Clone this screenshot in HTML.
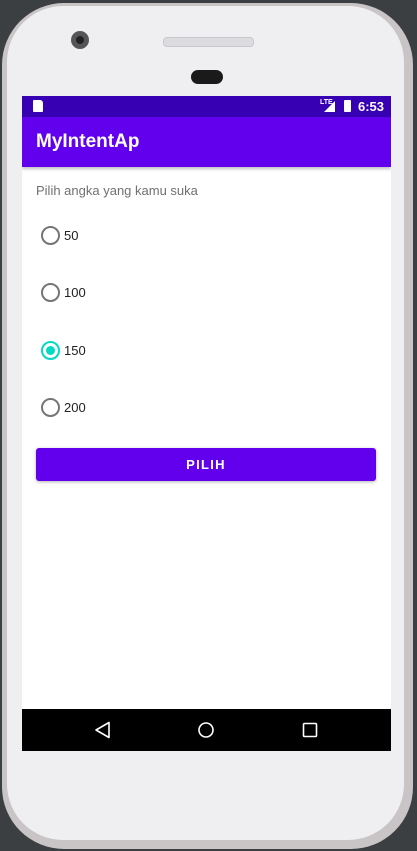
<!DOCTYPE html>
<html><head><style>
body{margin:0;width:417px;height:851px;background:#3c3f41;position:relative;overflow:hidden;font-family:"Liberation Sans",sans-serif}
.phone{position:absolute;left:2px;top:3px;width:411px;height:846px;border-radius:62px;background:#c9c4c6;}
.body{position:absolute;left:7px;top:6px;width:397px;height:834px;border-radius:56px;background:#efeff1;}
.screen{position:absolute;left:22px;top:96px;width:369px;height:655px;background:#fff;overflow:hidden}
.sb{height:21px;background:#3700b3;position:relative;color:#fff;font-size:13px}
.ab{height:50px;background:#6200ee;color:#fff;font-size:19px;font-weight:bold;line-height:50px;padding-left:14px;box-shadow:0 2px 3px rgba(0,0,0,.25);position:relative}
.nav{position:absolute;left:0;top:613px;width:369px;height:42px;background:#000}
.r{position:absolute;left:19px;width:15px;height:15px;border:2px solid #757575;border-radius:50%}
.t{position:absolute;left:42px;font-size:13px;color:#222}
</style></head><body>
<div class="phone"></div><div class="body"></div>
<div style="position:absolute;left:71px;top:31px;width:18px;height:18px;border-radius:50%;background:#555"><div style="position:absolute;left:5px;top:5px;width:8px;height:8px;border-radius:50%;background:#222"></div></div>
<div style="position:absolute;left:163px;top:37px;width:89px;height:8px;border-radius:4px;background:#dcdce0;border:1px solid #c8c8cc"></div>
<div style="position:absolute;left:191px;top:70px;width:32px;height:14px;border-radius:7px;background:#1a1a1a"></div>
<div class="screen">
<div class="sb"><div style="position:absolute;left:11px;top:4px;width:10px;height:12px;background:#fff;border-radius:1px 3px 1px 1px"></div>
<span style="position:absolute;left:298px;top:3px;font-size:7px;font-weight:bold">LTE</span>
<div style="position:absolute;left:302px;top:5px;width:0;height:0;border-left:11px solid transparent;border-bottom:11px solid #fff"></div>
<div style="position:absolute;left:322px;top:4px;width:7px;height:12px;background:#fff;border-radius:1px"></div>
<span style="position:absolute;left:336px;top:3px;font-weight:bold">6:53</span></div>
<div class="ab">MyIntentAp</div>
<div style="position:absolute;left:14px;top:87px;font-size:13px;color:#707070">Pilih angka yang kamu suka</div>
<div class="r" style="top:130px"></div><div class="t" style="top:132px">50</div>
<div class="r" style="top:187px"></div><div class="t" style="top:189px">100</div>
<div class="r" style="top:245px;border-color:#03dac5"><div style="position:absolute;left:3px;top:3px;width:9px;height:9px;border-radius:50%;background:#03dac5"></div></div><div class="t" style="top:247px">150</div>
<div class="r" style="top:302px"></div><div class="t" style="top:304px">200</div>
<div style="position:absolute;left:14px;top:352px;width:340px;height:33px;background:#6200ee;border-radius:3px;box-shadow:0 1px 3px rgba(0,0,0,.3);color:#fff;font-size:13px;font-weight:bold;letter-spacing:1.3px;text-align:center;line-height:33px">PILIH</div>
<div class="nav">
<svg width="369" height="42"><path d="M74 21 L87 13.5 L87 28.5 Z" fill="none" stroke="#fff" stroke-width="1.6" stroke-linejoin="round"/><circle cx="184" cy="21" r="7" fill="none" stroke="#fff" stroke-width="1.6"/><rect x="281.5" y="14.5" width="13" height="13" rx="1" fill="none" stroke="#fff" stroke-width="1.6"/></svg>
</div>
</div>
</body></html>
